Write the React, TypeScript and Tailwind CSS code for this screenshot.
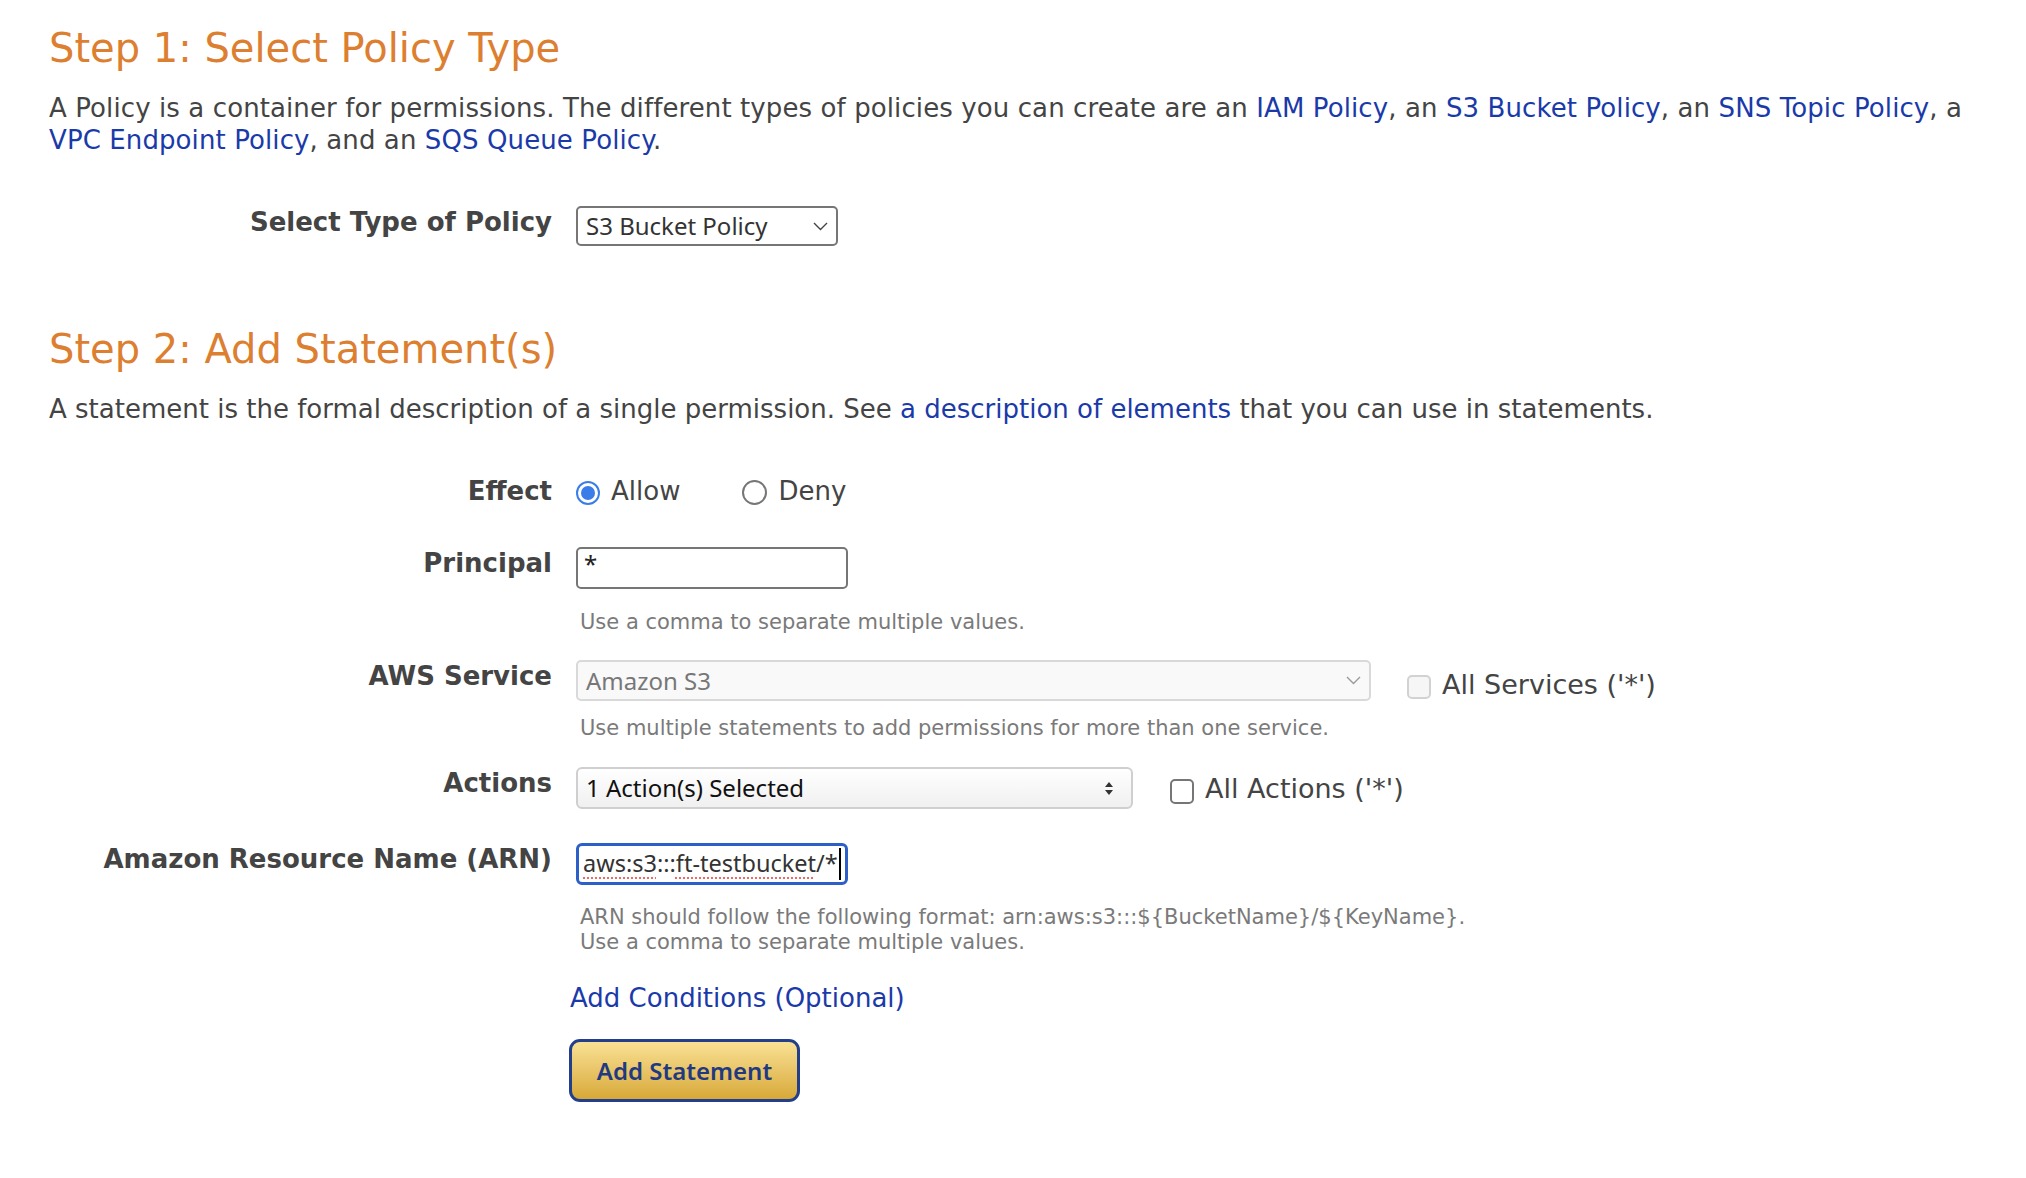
import React from "react";

function Chevron({ color = "#555" }: { color?: string }) {
  return (
    <svg width="15" height="9" viewBox="0 0 15 9">
      <path d="M1 1l6.5 6.5L14 1" fill="none" stroke={color} strokeWidth="1.4" />
    </svg>
  );
}

function UpDown() {
  return (
    <svg width="8" height="13" viewBox="0 0 8 13">
      <path d="M4 0L8 5H0z M4 13L0 8h8z" fill="#333" />
    </svg>
  );
}

function Row({ label, children, className = "" }: { label: string; children: React.ReactNode; className?: string }) {
  return (
    <div className={`flex items-start ${className}`}>
      <div className="w-[503px] shrink-0 text-right text-[26px] leading-[32px] font-bold text-[#444]">{label}</div>
      <div className="ml-[24px] flex-1">{children}</div>
    </div>
  );
}

function Help({ children, className = "" }: { children: React.ReactNode; className?: string }) {
  return <div className={`ml-[4px] text-[21px] leading-[25px] text-[#7a7a7a] ${className}`}>{children}</div>;
}

function Link({ children }: { children: React.ReactNode }) {
  return <a className="text-[#1b3aa9] cursor-pointer">{children}</a>;
}

export default function App() {
  return (
    <div className="min-h-screen bg-white font-['DejaVu_Sans',Verdana,sans-serif] text-[#444] pl-[49px] pr-[40px] pt-[24px]">
      <h1 className="text-[40px] leading-[48px] font-normal text-[#dd7f31]">Step 1: Select Policy Type</h1>
      <p className="mt-[20px] text-[26px] leading-[32px] tracking-[0.1px]">
        A Policy is a container for permissions. The different types of policies you can create are an <Link>IAM Policy</Link>, an{" "}
        <Link>S3 Bucket Policy</Link>, an <Link>SNS Topic Policy</Link>, a <Link>VPC Endpoint Policy</Link>, and an{" "}
        <Link>SQS Queue Policy</Link>.
      </p>

      <Row label="Select Type of Policy" className="mt-[50px]">
        <div className="w-[262px] h-[40px] border-2 border-[#767676] rounded-[5px] bg-white pl-[8px] pr-[8px] flex items-center justify-between font-['Noto_Sans',Arial,sans-serif] text-[24px] text-[#333]">
          <span>S3 Bucket Policy</span>
          <Chevron color="#444" />
        </div>
      </Row>

      <h1 className="mt-[79px] text-[40px] leading-[48px] font-normal text-[#dd7f31]">Step 2: Add Statement(s)</h1>
      <p className="mt-[20px] text-[26px] leading-[32px]">
        A statement is the formal description of a single permission. See <Link>a description of elements</Link> that you can use in
        statements.
      </p>

      <Row label="Effect" className="mt-[50px]">
        <div className="flex items-center h-[32px] text-[26px] leading-[32px]">
          <span className="mt-[3px] w-[24px] h-[24px] rounded-full border-[2.5px] border-[#3b7de8] bg-white flex items-center justify-center">
            <span className="w-[14px] h-[14px] rounded-full bg-[#3b7de8]" />
          </span>
          <span className="ml-[11px]">Allow</span>
          <span className="ml-[62px] mt-[3px] w-[25px] h-[25px] rounded-full border-2 border-[#767676] bg-white" />
          <span className="ml-[11px]">Deny</span>
        </div>
      </Row>

      <Row label="Principal" className="mt-[40px]">
        <div className="w-[272px] h-[42px] border-2 border-[#767676] rounded-[5px] bg-white px-[6px] pb-[8px] flex items-center font-['Noto_Sans',Arial,sans-serif] text-[24px] text-[#222]">
          *
        </div>
        <Help className="mt-[21px]">Use a comma to separate multiple values.</Help>
      </Row>

      <Row label="AWS Service" className="mt-[25px]">
        <div className="flex items-start">
          <div className="w-[795px] h-[41px] border-2 border-[#d9d9d9] rounded-[5px] bg-[#f9f9f9] pl-[8px] pr-[8px] flex items-center justify-between font-['Noto_Sans',Arial,sans-serif] text-[24px] text-[#777]">
            <span>Amazon S3</span>
            <Chevron color="#9a9a9a" />
          </div>
          <div className="ml-[36px] mt-[9px] flex items-center h-[32px] text-[27px] leading-[32px]">
            <span className="mt-[4px] w-[24px] h-[24px] rounded-[5px] border-2 border-[#d2d2d2] bg-[#f6f6f6]" />
            <span className="ml-[11px]">All Services ('*')</span>
          </div>
        </div>
        <Help className="mt-[15px]">Use multiple statements to add permissions for more than one service.</Help>
      </Row>

      <Row label="Actions" className="mt-[26px]">
        <div className="flex items-start">
          <div className="w-[557px] h-[42px] border-2 border-[#cfcfcf] rounded-[6px] bg-linear-to-b from-white to-[#f0f0f0] pl-[8px] pr-[18px] flex items-center justify-between font-['Noto_Sans',Arial,sans-serif] text-[24px] text-[#111]">
            <span>1 Action(s) Selected</span>
            <UpDown />
          </div>
          <div className="ml-[37px] mt-[6px] flex items-center h-[32px] text-[27px] leading-[32px]">
            <span className="mt-[4px] w-[24px] h-[25px] rounded-[5px] border-2 border-[#767676] bg-white" />
            <span className="ml-[11px]">All Actions ('*')</span>
          </div>
        </div>
      </Row>

      <Row label="Amazon Resource Name (ARN)" className="mt-[34px]">
        <div className="w-[272px] h-[42px] border-[3px] border-[#2d5fc8] rounded-[6px] bg-white pl-[4px] flex items-center font-['Noto_Sans',Arial,sans-serif] text-[23.5px] text-[#333] whitespace-nowrap overflow-hidden">
          <span className="underline decoration-dotted decoration-[#ef6b5f] decoration-2 underline-offset-[5px]">aws:s3</span>
          <span>:::</span>
          <span className="underline decoration-dotted decoration-[#ef6b5f] decoration-2 underline-offset-[5px]">ft-testbucket</span>
          <span>/*</span>
          <span className="ml-[1px] inline-block w-[2px] h-[32px] bg-black shrink-0" />
        </div>
        <Help className="mt-[20px]">
          ARN should follow the following format: arn:aws:s3:::$&#123;BucketName&#125;/$&#123;KeyName&#125;.
          <br />
          Use a comma to separate multiple values.
        </Help>
        <div className="mt-[27px] -ml-[6px] text-[26px] leading-[32px]">
          <Link>Add Conditions (Optional)</Link>
        </div>
        <button className="mt-[25px] -ml-[7px] w-[231px] h-[63px] rounded-[11px] border-[3px] border-[#233f8c] bg-linear-to-b from-[#f9e193] to-[#d8a935] font-['Noto_Sans',Arial,sans-serif] text-[24px] font-semibold text-[#1f3a80]">
          Add Statement
        </button>
      </Row>
    </div>
  );
}
